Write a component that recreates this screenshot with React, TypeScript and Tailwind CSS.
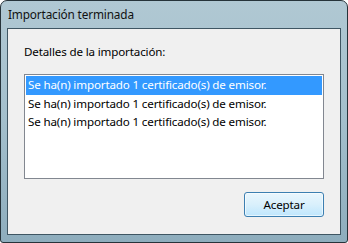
import React from 'react';

const rows = [
  'Se ha(n) importado 1 certificado(s) de emisor.',
  'Se ha(n) importado 1 certificado(s) de emisor.',
  'Se ha(n) importado 1 certificado(s) de emisor.',
];

export default function App() {
  return (
    <div
      className="w-[348px] h-[243px] flex flex-col px-[6px] pb-[7px] rounded-t-[7px] rounded-b-[3px] border border-[#26333a] bg-gradient-to-b from-[#b0c8d3] via-[#a3bfcc] to-[#8eadbd] text-[11.6px] tracking-[-0.15px] text-black"
      style={{ fontFamily: '"Noto Sans", "DejaVu Sans", sans-serif' }}
    >
      {/* title bar */}
      <div className="h-[27px] flex items-center pl-[1px] text-[11.8px] text-[#111]">
        Importación terminada
      </div>

      {/* client area */}
      <div className="flex-1 flex flex-col border border-[#3f5663] bg-[#f0f0f0] px-[16px] pt-[15px]">
        <div className="h-[16px] leading-[16px]">Detalles de la importación:</div>

        <div className="mt-[14px] h-[105px] border border-[#828790] bg-white p-[1px]">
          {rows.map((r, i) => (
            <div
              key={i}
              className={
                'h-[18.5px] leading-[18.5px] pl-[2px] whitespace-nowrap ' +
                (i === 0 ? 'bg-[#3399ff] text-white' : 'text-black')
              }
            >
              {r}
            </div>
          ))}
        </div>

        <div className="mt-[13px] flex justify-end">
          <button className="w-[80px] h-[25px] rounded-[3px] border border-[#3c7fb1] bg-gradient-to-b from-[#eaf6fd] via-[#d9f0fc] to-[#bee6fd] shadow-[inset_0_0_0_1px_#ffffff99] text-black">
            Aceptar
          </button>
        </div>
      </div>
    </div>
  );
}
